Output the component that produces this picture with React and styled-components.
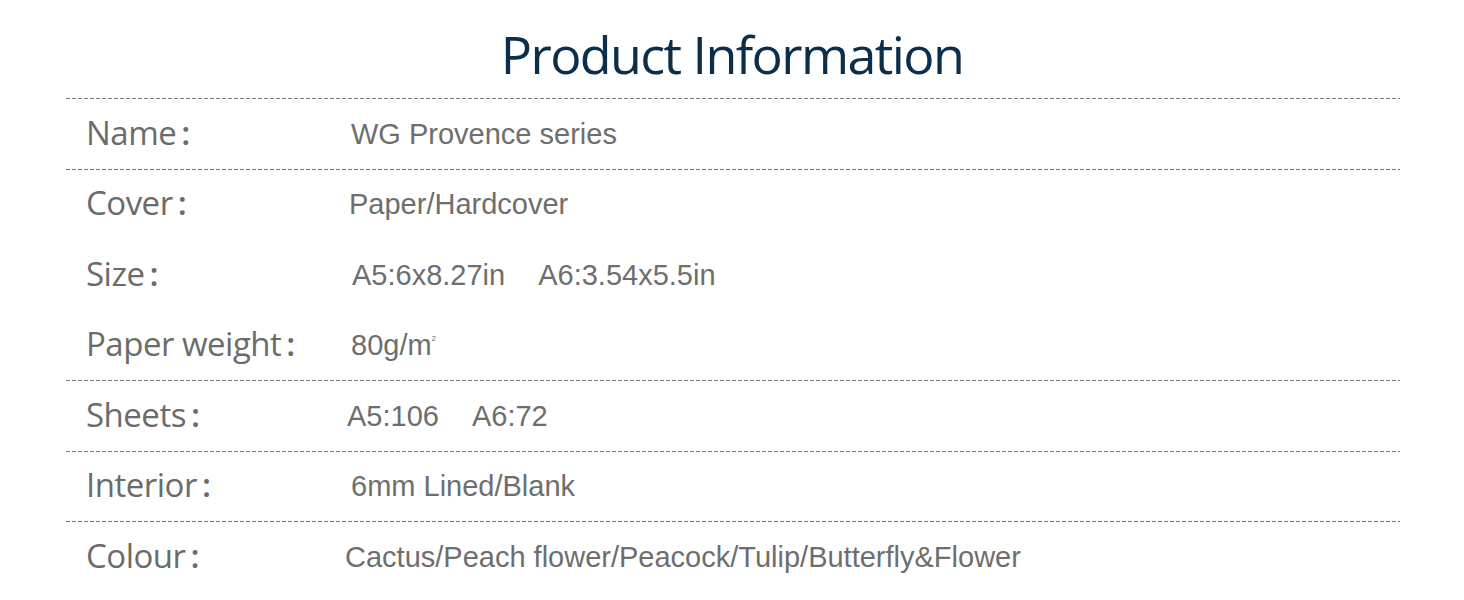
import React from "react";
import styled, { createGlobalStyle } from "styled-components";

const GlobalStyle = createGlobalStyle`
  html, body {
    margin: 0;
    padding: 0;
    background: #fff;
  }
`;

const Page = styled.div`
  width: 1464px;
  height: 600px;
  overflow: hidden;
  background: #fff;
`;

const Title = styled.h1`
  margin: 0;
  height: 98px;
  display: flex;
  justify-content: center;
  align-items: flex-start;
  padding-top: 18px;
  box-sizing: border-box;
  font-family: "Open Sans", "Noto Sans", sans-serif;
  font-weight: 500;
  font-size: 52px;
  letter-spacing: -1.6px;
  color: #0b2e4a;
`;

const Dash = styled.div`
  height: 1px;
  background: repeating-linear-gradient(to right, #7c7c7c 0 4px, transparent 4px 6px);
`;

const Table = styled.div`
  margin-left: 66px;
  width: 1334px;
`;

const Row = styled.div`
  position: relative;
  height: 70.5px;
  display: flex;
  align-items: center;
`;

const Divider = styled(Dash)`
  position: absolute;
  left: 0;
  right: 0;
  bottom: 0;
`;

const Label = styled.div`
  width: 279px;
  padding: 0 0 4px 20px;
  box-sizing: border-box;
  font-family: "Open Sans", "Noto Sans", sans-serif;
  font-weight: 500;
  font-size: 33px;
  letter-spacing: -0.5px;
  line-height: 1;
  color: #6b6b6b;
  flex-shrink: 0;
`;

const Colon = styled.span`
  margin-left: 5px;
  font-weight: 600;
`;

const Value = styled.div`
  margin-left: ${(p) => p.$shift || 0}px;
  font-family: "Liberation Sans", Arial, sans-serif;
  font-size: 29px;
  line-height: 1;
  color: #6e6e6e;
  display: flex;
  gap: 33px;
`;

const Sup = styled.sup`
  font-size: 8px;
  vertical-align: 14px;
`;

const rows = [
  { label: "Name", value: ["WG Provence series"], shift: 6, line: true },
  { label: "Cover", value: ["Paper/Hardcover"], shift: 4 },
  { label: "Size", value: ["A5:6x8.27in", "A6:3.54x5.5in"], shift: 7 },
  { label: "Paper weight", value: [<span key="w">80g/m<Sup>2</Sup></span>], shift: 6, line: true },
  { label: "Sheets", value: ["A5:106", "A6:72"], shift: 2, line: true },
  { label: "Interior", value: ["6mm Lined/Blank"], shift: 6, line: true },
  { label: "Colour", value: ["Cactus/Peach flower/Peacock/Tulip/Butterfly&Flower"], shift: 0 },
];

export default function App() {
  return (
    <Page>
      <GlobalStyle />
      <Title>Product Information</Title>
      <Table>
        <Dash />
        {rows.map((r) => (
          <Row key={r.label}>
            <Label>
              {r.label}
              <Colon>:</Colon>
            </Label>
            <Value $shift={r.shift}>
              {r.value.map((v, i) => (
                <span key={i}>{v}</span>
              ))}
            </Value>
            {r.line && <Divider />}
          </Row>
        ))}
      </Table>
    </Page>
  );
}
